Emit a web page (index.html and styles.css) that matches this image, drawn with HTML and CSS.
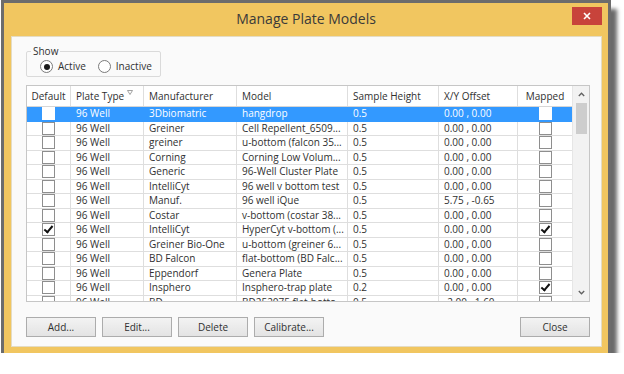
FILE: index.html
```
<!DOCTYPE html>
<html lang="en">
<head>
    <meta charset="UTF-8">
    <title>Manage Plate Models</title>
    <link rel="stylesheet" href="styles.css">
</head>
<body>
    <div class="window">
        <div class="titlebar">
            <span class="title">Manage Plate Models</span>
            <span class="close-btn">
                <svg width="8" height="8" viewBox="0 0 8 8"><path d="M1 1L7 7M7 1L1 7" stroke="#fff" stroke-width="1.6"/></svg>
            </span>
        </div>

        <div class="content">
            <fieldset class="show-group">
                <legend>Show</legend>
                <div class="radio-row">
                    <label class="radio"><span class="radio-dot checked"></span>Active</label>
                    <label class="radio"><span class="radio-dot"></span>Inactive</label>
                </div>
            </fieldset>

            <div class="grid">
                <div class="grid-view">
                    <div class="row head">
                        <div class="cell center">Default</div>
                        <div class="cell">Plate Type <svg class="sort" width="6" height="5" viewBox="0 0 6 5"><path d="M0.5 0.5H5.5L3 4.5Z" fill="none" stroke="#8a8a8a" stroke-width="0.8"/></svg></div>
                        <div class="cell">Manufacturer</div>
                        <div class="cell">Model</div>
                        <div class="cell">Sample Height</div>
                        <div class="cell">X/Y Offset</div>
                        <div class="cell center">Mapped</div>
                    </div>

                    <div class="row selected">
                        <div class="cell box"><span class="chk"></span></div>
                        <div class="cell">96 Well</div>
                        <div class="cell">3Dbiomatric</div>
                        <div class="cell">hangdrop</div>
                        <div class="cell">0.5</div>
                        <div class="cell">0.00 , 0.00</div>
                        <div class="cell box"><span class="chk"></span></div>
                    </div>
                    <div class="row">
                        <div class="cell box"><span class="chk"></span></div>
                        <div class="cell">96 Well</div>
                        <div class="cell">Greiner</div>
                        <div class="cell">Cell Repellent_6509...</div>
                        <div class="cell">0.5</div>
                        <div class="cell">0.00 , 0.00</div>
                        <div class="cell box"><span class="chk"></span></div>
                    </div>
                    <div class="row">
                        <div class="cell box"><span class="chk"></span></div>
                        <div class="cell">96 Well</div>
                        <div class="cell">greiner</div>
                        <div class="cell">u-bottom (falcon 35...</div>
                        <div class="cell">0.5</div>
                        <div class="cell">0.00 , 0.00</div>
                        <div class="cell box"><span class="chk"></span></div>
                    </div>
                    <div class="row">
                        <div class="cell box"><span class="chk"></span></div>
                        <div class="cell">96 Well</div>
                        <div class="cell">Corning</div>
                        <div class="cell">Corning Low Volum...</div>
                        <div class="cell">0.5</div>
                        <div class="cell">0.00 , 0.00</div>
                        <div class="cell box"><span class="chk"></span></div>
                    </div>
                    <div class="row">
                        <div class="cell box"><span class="chk"></span></div>
                        <div class="cell">96 Well</div>
                        <div class="cell">Generic</div>
                        <div class="cell">96-Well Cluster Plate</div>
                        <div class="cell">0.5</div>
                        <div class="cell">0.00 , 0.00</div>
                        <div class="cell box"><span class="chk"></span></div>
                    </div>
                    <div class="row">
                        <div class="cell box"><span class="chk"></span></div>
                        <div class="cell">96 Well</div>
                        <div class="cell">IntelliCyt</div>
                        <div class="cell">96 well v bottom test</div>
                        <div class="cell">0.5</div>
                        <div class="cell">0.00 , 0.00</div>
                        <div class="cell box"><span class="chk"></span></div>
                    </div>
                    <div class="row">
                        <div class="cell box"><span class="chk"></span></div>
                        <div class="cell">96 Well</div>
                        <div class="cell">Manuf.</div>
                        <div class="cell">96 well iQue</div>
                        <div class="cell">0.5</div>
                        <div class="cell">5.75 , -0.65</div>
                        <div class="cell box"><span class="chk"></span></div>
                    </div>
                    <div class="row">
                        <div class="cell box"><span class="chk"></span></div>
                        <div class="cell">96 Well</div>
                        <div class="cell">Costar</div>
                        <div class="cell">v-bottom (costar 38...</div>
                        <div class="cell">0.5</div>
                        <div class="cell">0.00 , 0.00</div>
                        <div class="cell box"><span class="chk"></span></div>
                    </div>
                    <div class="row">
                        <div class="cell box"><span class="chk checked"></span></div>
                        <div class="cell">96 Well</div>
                        <div class="cell">IntelliCyt</div>
                        <div class="cell">HyperCyt v-bottom (...</div>
                        <div class="cell">0.5</div>
                        <div class="cell">0.00 , 0.00</div>
                        <div class="cell box"><span class="chk checked"></span></div>
                    </div>
                    <div class="row">
                        <div class="cell box"><span class="chk"></span></div>
                        <div class="cell">96 Well</div>
                        <div class="cell">Greiner Bio-One</div>
                        <div class="cell">u-bottom (greiner 6...</div>
                        <div class="cell">0.5</div>
                        <div class="cell">0.00 , 0.00</div>
                        <div class="cell box"><span class="chk"></span></div>
                    </div>
                    <div class="row">
                        <div class="cell box"><span class="chk"></span></div>
                        <div class="cell">96 Well</div>
                        <div class="cell">BD Falcon</div>
                        <div class="cell">flat-bottom (BD Falc...</div>
                        <div class="cell">0.5</div>
                        <div class="cell">0.00 , 0.00</div>
                        <div class="cell box"><span class="chk"></span></div>
                    </div>
                    <div class="row">
                        <div class="cell box"><span class="chk"></span></div>
                        <div class="cell">96 Well</div>
                        <div class="cell">Eppendorf</div>
                        <div class="cell">Genera Plate</div>
                        <div class="cell">0.5</div>
                        <div class="cell">0.00 , 0.00</div>
                        <div class="cell box"><span class="chk"></span></div>
                    </div>
                    <div class="row">
                        <div class="cell box"><span class="chk"></span></div>
                        <div class="cell">96 Well</div>
                        <div class="cell">Insphero</div>
                        <div class="cell">Insphero-trap plate</div>
                        <div class="cell">0.2</div>
                        <div class="cell">0.00 , 0.00</div>
                        <div class="cell box"><span class="chk checked"></span></div>
                    </div>
                    <div class="row">
                        <div class="cell box"><span class="chk"></span></div>
                        <div class="cell">96 Well</div>
                        <div class="cell">BD</div>
                        <div class="cell">BD252075 flat-botto...</div>
                        <div class="cell">0.5</div>
                        <div class="cell">-2.00 , 1.60</div>
                        <div class="cell box"><span class="chk"></span></div>
                    </div>
                </div>

                <div class="vscroll">
                    <div class="arrow">
                        <svg width="7" height="5" viewBox="0 0 7 5"><path d="M0.8 4L3.5 1.2L6.2 4" fill="none" stroke="#606060" stroke-width="1.3"/></svg>
                    </div>
                    <div class="thumb"></div>
                    <div class="track"></div>
                    <div class="arrow">
                        <svg width="7" height="5" viewBox="0 0 7 5"><path d="M0.8 1L3.5 3.8L6.2 1" fill="none" stroke="#606060" stroke-width="1.3"/></svg>
                    </div>
                </div>
            </div>

            <div class="buttons">
                <button class="btn">Add...</button>
                <button class="btn">Edit...</button>
                <button class="btn">Delete</button>
                <button class="btn">Calibrate...</button>
                <button class="btn btn-close">Close</button>
            </div>
        </div>
    </div>
</body>
</html>
```

FILE: styles.css
```
:root {
    --frame: #f1c660;
    --line: #dedede;
    --select: #3399ff;
    --cols: 44px 73px 93px 111px 91px 79px 55px;
}

body {
    margin: 0;
    background: #fff;
    font-family: 'Open Sans', 'Noto Sans', sans-serif;
    font-size: 10px;
    color: #303030;
}

.window {
    width: 604px;
    height: 350px;
    margin: 3px 0 0 4px;
    background: var(--frame);
    box-shadow:
        0 0 0 3px #6c6c6c,
        6px 9px 4px 3px #6a6a6a;
    display: flex;
    flex-direction: column;
}

.titlebar {
    height: 33px;
    flex-shrink: 0;
    display: grid;
    grid-template-columns: 1fr auto 1fr;
    align-items: start;
}

.title {
    grid-column: 2;
    padding-top: 7px;
    font-size: 14px;
    line-height: 18px;
    color: #3a3a3a;
}

.close-btn {
    grid-column: 3;
    justify-self: end;
    width: 30px;
    height: 18px;
    margin: 4px 6px 0 0;
    background: #c8433b;
    display: flex;
    align-items: center;
    justify-content: center;
}

.content {
    flex: 1;
    margin: 0 6px 6px 7px;
    background: #fafafa;
    border: 1px solid #e4dcc4;
    padding: 8px 11px 0 14px;
    display: flex;
    flex-direction: column;
}

/* Show group */
.show-group {
    width: 135px;
    box-sizing: border-box;
    margin: 0;
    padding: 0 0 3px 4px;
    border: 1px solid #dadada;
    border-radius: 2px;
}

.show-group legend {
    padding: 0 2px;
    line-height: 13px;
}

.radio-row {
    display: flex;
    gap: 12px;
    padding-left: 9px;
    margin-top: 2px;
    line-height: 13px;
}

.radio {
    display: flex;
    align-items: center;
    gap: 5px;
}

.radio-dot {
    width: 11px;
    height: 11px;
    border: 1px solid #7a7a7a;
    border-radius: 50%;
    background: #fff;
    display: flex;
    align-items: center;
    justify-content: center;
}

.radio-dot.checked::after {
    content: "";
    width: 6px;
    height: 6px;
    border-radius: 50%;
    background: #1a1a1a;
}

/* Grid */
.grid {
    margin-top: 8px;
    height: 217px;
    box-sizing: border-box;
    border: 1px solid #c6c6c6;
    background: #fff;
    display: flex;
}

.grid-view {
    flex: 1;
    overflow: hidden;
}

.row {
    display: grid;
    grid-template-columns: var(--cols);
    height: 14.5px;
    box-sizing: border-box;
    border-bottom: 1px solid var(--line);
    line-height: 13.5px;
}

.row.head {
    height: 21px;
    line-height: 20px;
    border-bottom-color: #d6d6d6;
}

.cell {
    padding: 0 2px 0 5px;
    border-right: 1px solid var(--line);
    overflow: hidden;
    white-space: nowrap;
}

.cell.center {
    text-align: center;
    padding: 0;
}

.cell.box {
    padding: 0;
    display: flex;
    align-items: center;
    justify-content: center;
}

.sort {
    vertical-align: 5px;
}

.row.selected {
    background: var(--select);
    color: #fff;
    border-bottom-color: var(--select);
}

.row.selected .cell {
    border-right-color: var(--select);
}

.chk {
    width: 11px;
    height: 11px;
    border: 1px solid #8e8e8e;
    background: #fff;
    position: relative;
}

.row.selected .chk {
    border-color: #fff;
}

.chk.checked::after {
    content: "";
    position: absolute;
    left: 3px;
    top: 0px;
    width: 3px;
    height: 7px;
    border: solid #111;
    border-width: 0 2px 2px 0;
    transform: rotate(40deg);
}

.vscroll {
    width: 16px;
    background: #f2f2f2;
    border-left: 1px solid #e6e6e6;
    display: flex;
    flex-direction: column;
    align-items: center;
}

.arrow {
    height: 17px;
    width: 100%;
    display: flex;
    align-items: center;
    justify-content: center;
}

.thumb {
    width: 11px;
    height: 31px;
    background: #cdcdcd;
}

.track {
    flex: 1;
}

/* Buttons */
.buttons {
    display: flex;
    gap: 6px;
    margin-top: 15px;
}

.btn {
    width: 70px;
    height: 20px;
    padding: 0;
    border: 1px solid #acacac;
    background: linear-gradient(#f3f3f3, #e3e3e3);
    font-family: inherit;
    font-size: 10px;
    color: #303030;
}

.btn-close {
    margin-left: auto;
}
```
